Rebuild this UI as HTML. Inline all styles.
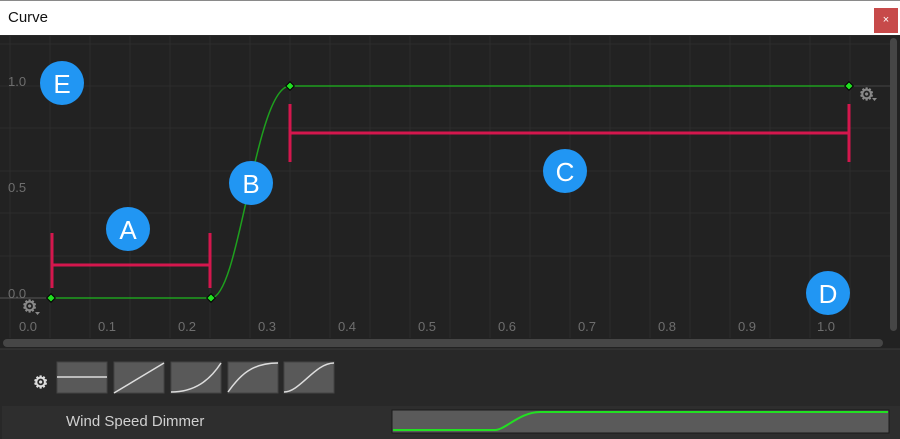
<!DOCTYPE html>
<html><head><style>
body{margin:0;width:900px;height:439px;overflow:hidden;background:#282828;font-family:"Liberation Sans",sans-serif;position:relative}
.title{position:absolute;left:0;top:0;width:900px;height:35px;background:#fff;border-top:1px solid #8a8a8a;box-sizing:border-box}
.title span{position:absolute;left:8px;top:8px;font-size:15px;color:#111}
.close{position:absolute;left:874px;top:7px;width:24px;height:25px;background:#c74a4a;color:#fff;font-size:11px;text-align:center;line-height:25px}
</style></head><body>
<div class="title"><span>Curve</span><div class="close">×</div></div>
<svg width="900" height="439" style="position:absolute;left:0;top:0" xmlns="http://www.w3.org/2000/svg">
<rect x="0" y="36" width="900" height="313" fill="#222"/>
<g stroke="#2c2c2c" stroke-width="1">
<line x1="10" y1="36" x2="10" y2="338"/><line x1="50" y1="36" x2="50" y2="338"/><line x1="90" y1="36" x2="90" y2="338"/><line x1="130" y1="36" x2="130" y2="338"/><line x1="170" y1="36" x2="170" y2="338"/><line x1="210" y1="36" x2="210" y2="338"/><line x1="250" y1="36" x2="250" y2="338"/><line x1="290" y1="36" x2="290" y2="338"/><line x1="330" y1="36" x2="330" y2="338"/><line x1="370" y1="36" x2="370" y2="338"/><line x1="410" y1="36" x2="410" y2="338"/><line x1="450" y1="36" x2="450" y2="338"/><line x1="490" y1="36" x2="490" y2="338"/><line x1="530" y1="36" x2="530" y2="338"/><line x1="570" y1="36" x2="570" y2="338"/><line x1="610" y1="36" x2="610" y2="338"/><line x1="650" y1="36" x2="650" y2="338"/><line x1="690" y1="36" x2="690" y2="338"/><line x1="730" y1="36" x2="730" y2="338"/><line x1="770" y1="36" x2="770" y2="338"/><line x1="810" y1="36" x2="810" y2="338"/><line x1="850" y1="36" x2="850" y2="338"/>
<line x1="0" y1="44" x2="890" y2="44"/><line x1="0" y1="86" x2="890" y2="86"/><line x1="0" y1="128" x2="890" y2="128"/><line x1="0" y1="171" x2="890" y2="171"/><line x1="0" y1="213" x2="890" y2="213"/><line x1="0" y1="256" x2="890" y2="256"/>
</g>
<line x1="0" y1="298" x2="51" y2="298" stroke="#555"/>
<line x1="849" y1="86" x2="890" y2="86" stroke="#444"/>
<g fill="#6e6e6e" font-size="13" text-anchor="middle">
<text x="28" y="331">0.0</text><text x="107" y="331">0.1</text><text x="187" y="331">0.2</text><text x="267" y="331">0.3</text><text x="347" y="331">0.4</text><text x="427" y="331">0.5</text><text x="507" y="331">0.6</text><text x="587" y="331">0.7</text><text x="667" y="331">0.8</text><text x="747" y="331">0.9</text><text x="826" y="331">1.0</text>
</g>
<g fill="#6e6e6e" font-size="13"><text x="8" y="86">1.0</text><text x="8" y="192">0.5</text><text x="8" y="298">0.0</text></g>
<path d="M51 298 L211 298 C240 298 255 86 290 86 L849 86" stroke="#1ea01e" stroke-width="1.5" fill="none"/>
<g fill="#22e022" stroke="#000" stroke-width="1"><rect x="48" y="295" width="6" height="6" transform="rotate(45 51 298)"/><rect x="208" y="295" width="6" height="6" transform="rotate(45 211 298)"/><rect x="287" y="83" width="6" height="6" transform="rotate(45 290 86)"/><rect x="846" y="83" width="6" height="6" transform="rotate(45 849 86)"/></g>
<g stroke="#d4174d" stroke-width="3"><line x1="52" y1="233" x2="52" y2="288"/><line x1="210" y1="233" x2="210" y2="288"/><line x1="52" y1="265" x2="210" y2="265"/>
<line x1="290" y1="104" x2="290" y2="162"/><line x1="849" y1="104" x2="849" y2="162"/><line x1="290" y1="133" x2="849" y2="133"/></g>
<g fill="#8a8a8a" font-size="17" font-weight="bold"><text x="22" y="312">⚙</text><text x="859" y="100">⚙</text></g>
<g fill="#8a8a8a"><path d="M35 312h5l-2.5 3z"/><path d="M872 98h5l-2.5 3z"/></g>
<g fill="#2196f3"><circle cx="62" cy="83" r="22"/><circle cx="251" cy="183" r="22"/><circle cx="128" cy="229" r="22"/><circle cx="565" cy="171" r="22"/><circle cx="828" cy="293" r="22"/></g>
<g fill="#fff" font-size="26" text-anchor="middle"><text x="62" y="93">E</text><text x="251" y="193">B</text><text x="128" y="239">A</text><text x="565" y="181">C</text><text x="828" y="303">D</text></g>
<rect x="3" y="339" width="880" height="8" rx="4" fill="#464646"/>
<rect x="890" y="38" width="7" height="293" rx="3.5" fill="#464646"/>
<line x1="0" y1="349" x2="900" y2="349" stroke="#3a3a3a"/>
<text x="33" y="388" fill="#ddd" font-size="17" font-weight="bold">⚙</text>
<g fill="#595959" stroke="#444"><rect x="57" y="362" width="50" height="31"/><rect x="114" y="362" width="50" height="31"/><rect x="171" y="362" width="50" height="31"/><rect x="228" y="362" width="50" height="31"/><rect x="284" y="362" width="50" height="31"/></g>
<g stroke="#ddd" stroke-width="1.5" fill="none"><path d="M57 377H107"/><path d="M114 393L164 363"/><path d="M171 392C195 392 210 380 221 363"/><path d="M228 392C240 375 252 363 278 363"/><path d="M284 392C300 392 315 363 334 363"/></g>
<rect x="2" y="406" width="898" height="33" fill="#2e2e2e"/>
<text x="66" y="426" fill="#d0d0d0" font-size="15">Wind Speed Dimmer</text>
<rect x="392" y="410" width="497" height="23" fill="#5a5a5a" stroke="#1a1a1a"/>
<path d="M393 430L495 430C505 430 520 412 540 412L888 412" stroke="#22e022" stroke-width="2" fill="none"/>
</svg>
</body></html>
